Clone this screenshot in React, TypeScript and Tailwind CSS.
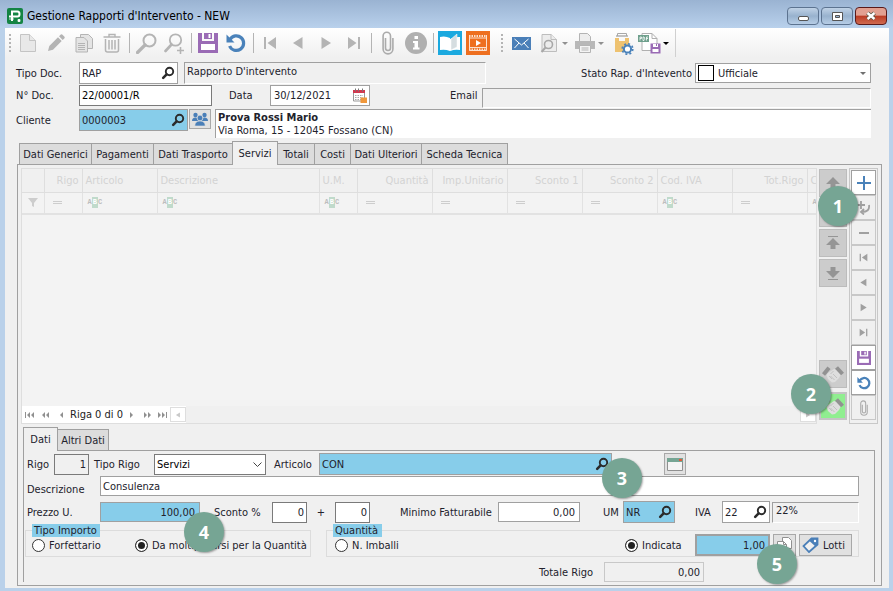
import React, { useState } from "react";
import clsx from "clsx";

const mainTabs = [
  { name: "Dati Generici", width: "w-[73px]" },
  { name: "Pagamenti", width: "w-[63px]" },
  { name: "Dati Trasporto", width: "w-[80px]" },
  { name: "Servizi", width: "w-[46px]" },
  { name: "Totali", width: "w-[38px]" },
  { name: "Costi", width: "w-[37px]" },
  { name: "Dati Ulteriori", width: "w-[72px]" },
  { name: "Scheda Tecnica", width: "w-[87px]" },
];

const columns = [
  { title: "", filter: "funnel", width: "w-[22px]", right: false },
  { title: "Rigo", filter: "eq", width: "w-[38px]", right: true },
  { title: "Articolo", filter: "abc", width: "w-[75px]", right: false },
  { title: "Descrizione", filter: "abc", width: "w-[162px]", right: false },
  { title: "U.M.", filter: "abc", width: "w-[38px]", right: false },
  { title: "Quantità", filter: "eq", width: "w-[75px]", right: true },
  { title: "Imp.Unitario", filter: "eq", width: "w-[75px]", right: true },
  { title: "Sconto 1", filter: "eq", width: "w-[75px]", right: true },
  { title: "Sconto 2", filter: "eq", width: "w-[75px]", right: true },
  { title: "Cod. IVA", filter: "abc", width: "w-[75px]", right: false },
  { title: "Tot.Rigo", filter: "eq", width: "w-[75px]", right: true },
  { title: "C", filter: "abc", width: "", right: false },
];

type IconProps = { className?: string };

const SearchIcon = ({ className }: IconProps) => (
  <svg viewBox="0 0 14 14" className={clsx("h-3.5 w-3.5", className)} fill="none" stroke="currentColor">
    <circle cx="8.5" cy="5.5" r="3.7" strokeWidth="1.9" />
    <path d="M5.6 8.4 2.2 11.800" strokeWidth="2.6" strokeLinecap="round" />
  </svg>
);

const SaveIcon = ({ className }: IconProps) => (
  <svg viewBox="0 0 20 20" className={className}>
    <path d="M0 0h4v8h12V0h4v20H0z" fill="#9a6bb5" />
    <path d="M6 0h8v6H6z" fill="#9a6bb5" />
    <path d="M10.500 1h2v4h-2z" fill="#fff" />
    <path d="M3 11h14v6H3z" fill="#fff" />
  </svg>
);

const UndoIcon = ({ className }: IconProps) => (
  <svg viewBox="0 0 20 20" className={className} fill="none">
    <path d="M4 6.500A7.300 7.300 0 1 1 3.600 13" stroke="#4a82ba" strokeWidth="3.200" />
    <path d="M.5 1.500V9.500H8.500z" fill="#4a82ba" />
  </svg>
);

const ClipIcon = ({ className }: IconProps) => (
  <svg viewBox="0 0 12 24" className={className} fill="none" stroke="#ababab" strokeWidth="1.600">
    <path d="M3.500 7v10a2.500 2.500 0 0 0 5 0V5a3.700 3.700 0 0 0-7.400 0v13a4.900 4.900 0 0 0 9.800 0V7" />
  </svg>
);

const StepIcon = ({ kind, className }: { kind: string; className?: string }) => (
  <svg viewBox="0 0 14 14" className={className} fill="currentColor">
    {kind === "first" && <path d="M1 1h2v12H1zM13 1v12L4.500 7z" />}
    {kind === "prev" && <path d="M11.500 1v12L2 7z" />}
    {kind === "next" && <path d="M2.500 1v12L12 7z" />}
    {kind === "last" && <path d="M11 1h2v12h-2zM1 1v12l8.500-6z" />}
  </svg>
);

const Handshake = () => (
  <svg viewBox="0 0 22 18" className="h-[18px] w-[22px] shrink-0">
    <path d="M6 8l6-4 4 1 3 4-2 4-4 4-3 .5L6 14 4.500 10z" fill="#dedede" />
    <path d="M8.500 9l3-3M10 14l-3-3M12.500 15l-4-4M15 13l-4-4" stroke="#c2c2c2" fill="none" />
    <path d="M1.500 9.500L7 2.800" stroke="#929292" strokeWidth="4" />
    <path d="M14.500 2.500l6 6.500" stroke="#929292" strokeWidth="4" />
  </svg>
);

const Caret = ({ className }: IconProps) => (
  <svg viewBox="0 0 6 3" className={clsx("h-[3px] w-1.5 shrink-0", className)}>
    <path d="M0 0h6L3 3z" fill="currentColor" />
  </svg>
);

const Separator = () => (
  <span className="flex w-1.5 shrink-0 justify-center">
    <span className="h-5 w-px bg-[#b4b4b4]" />
  </span>
);

const Grip = ({ className }: IconProps) => (
  <span className={clsx("flex shrink-0 flex-col items-center gap-0.5", className)}>
    {[0, 1, 2, 3, 4].map((i) => (
      <span key={i} className="h-0.5 w-0.5 bg-[#b4b4b4]" />
    ))}
  </span>
);

const ToolButton = ({ label, children }: { label: string; children: React.ReactNode }) => (
  <button aria-label={label} className="flex h-7 w-7 shrink-0 items-center justify-center text-[#b4b4b4]">
    {children}
  </button>
);

const Badge = ({ n, className }: { n: number; className: string }) => (
  <span
    className={clsx(
      "absolute z-10 flex h-10 w-10 items-center justify-center rounded-full bg-[#76a594] font-['Open_Sans',sans-serif] text-lg font-bold text-white shadow-[1px_1px_2px_rgba(0,0,0,0.35)] [font-stretch:normal]",
      className
    )}
  >
    {n}
  </span>
);

const Lookup = ({
  id,
  value,
  className,
  label,
}: {
  id: string;
  value: string;
  className: string;
  label: string;
}) => (
  <div className={clsx("flex h-[22px] items-center border border-[#a0a0a0] px-0.5", className)}>
    <input id={id} defaultValue={value} className="w-full min-w-0 bg-transparent outline-none" />
    <button aria-label={label} className="shrink-0 text-[#2b2b2b]">
      <SearchIcon />
    </button>
  </div>
);

const Toolbar = () => (
  <div className="flex h-[30px] items-center bg-linear-to-b from-white to-[#f0f0f0]">
    <Grip className="w-[9px]" />
    <ToolButton label="Nuovo">
      <svg viewBox="0 0 18 20" className="h-5 w-[18px]" fill="#e8e8e8" stroke="#c4c4c4">
        <path d="M1.500 1.500h9l6 6v11h-15z" />
        <path d="M10.500 1.500v6h6" />
      </svg>
    </ToolButton>
    <ToolButton label="Modifica">
      <svg viewBox="0 0 18 18" className="h-[18px] w-[18px]" fill="currentColor">
        <path d="M1 17l1.300-5L11 3.300 14.700 7 6 15.700zM12 2.300l1.800-1.800q.7-.5 1.400 0l2.300 2.300q.5.700 0 1.400L15.700 6z" />
      </svg>
    </ToolButton>
    <ToolButton label="Duplica">
      <svg viewBox="0 0 18 20" className="h-5 w-[18px]" fill="#e4e4e4" stroke="#b4b4b4">
        <path d="M5.500 1.500h8l4 4v10h-12z" />
        <path d="M1 4.500h8l3.500 3.500v11H1z" />
        <path d="M3 10.500h7M3 12.500h7M3 14.500h7M3 16.500h7" />
      </svg>
    </ToolButton>
    <ToolButton label="Elimina">
      <svg viewBox="0 0 18 20" className="h-5 w-[18px]" fill="none" stroke="currentColor">
        <path d="M.5 4h17M6 3.500V1.500h6v2" strokeWidth="1.400" />
        <path d="M2.500 6v11q0 2 2 2h9q2 0 2-2V6M6 7v9.500M9 7v9.500M12 7v9.500" strokeWidth="1.500" />
      </svg>
    </ToolButton>
    <Separator />
    <ToolButton label="Cerca">
      <svg viewBox="0 0 21 21" className="h-[21px] w-[21px]" fill="none" stroke="currentColor">
        <circle cx="13.500" cy="7.500" r="6" strokeWidth="2" />
        <path d="M9 12l-7.500 7.500" strokeWidth="3.200" strokeLinecap="round" />
      </svg>
    </ToolButton>
    <ToolButton label="Ricerca avanzata">
      <svg viewBox="0 0 21 21" className="h-[21px] w-[21px]" fill="none" stroke="currentColor">
        <circle cx="11.500" cy="7" r="5.700" strokeWidth="1.800" />
        <path d="M7.500 11.500L1.500 18" strokeWidth="2.600" strokeLinecap="round" />
        <path d="M13 17.500h7M16.500 14v7" strokeWidth="1.600" />
      </svg>
    </ToolButton>
    <Separator />
    <ToolButton label="Salva">
      <SaveIcon className="h-5 w-5" />
    </ToolButton>
    <ToolButton label="Annulla">
      <UndoIcon className="h-5 w-5" />
    </ToolButton>
    <Separator />
    {["first", "prev", "next", "last"].map((kind) => (
      <ToolButton key={kind} label={kind}>
        <StepIcon kind={kind} className="h-3.5 w-3.5" />
      </ToolButton>
    ))}
    <Separator />
    <ToolButton label="Allegati">
      <ClipIcon className="h-6 w-3" />
    </ToolButton>
    <ToolButton label="Informazioni">
      <svg viewBox="0 0 22 22" className="h-[22px] w-[22px]">
        <circle cx="11" cy="11" r="11" fill="#b0b0b0" />
        <path d="M9.500 4h3.500v3H9.500zM8 9h5v6.500h1.500V17.500H8v-2h1.500V11H8z" fill="#fff" />
      </svg>
    </ToolButton>
    <Separator />
    <ToolButton label="Manuale">
      <svg viewBox="0 0 24 24" className="h-6 w-6">
        <path d="M0 0h24v24H0z" fill="#1ba9df" />
        <path d="M2 6q5-1.500 10 1v13q-5-2-10-1z" fill="#fff" />
        <path d="M12 8q5-2.500 10-2v13q-5-1-10 1z" fill="#fff" />
        <path d="M13 8l6-5v13l-6 3z" fill="#d5dde0" stroke="#fff" strokeWidth=".5" />
      </svg>
    </ToolButton>
    <ToolButton label="Video">
      <svg viewBox="0 0 24 24" className="h-6 w-6">
        <path d="M0 0h24v24H0z" fill="#ee6f1f" />
        <path d="M3 5h18M3 18.500h18" stroke="#fbe0cd" strokeWidth="2" strokeDasharray="1.500 1" />
        <path d="M3.500 4v15.500h17V4M3.500 7h17M3.500 16.500h17" stroke="#fbe0cd" fill="none" strokeWidth="1" />
        <path d="M10 9l5 3-5 3z" fill="#fff" />
      </svg>
    </ToolButton>
    <Grip className="w-5" />
    <button aria-label="Invia email" className="flex w-[18px] shrink-0 justify-center">
      <svg viewBox="0 0 19 13" className="h-[13px] w-[19px] shrink-0">
        <path d="M0 0h19v13H0z" fill="#4a7fb8" />
        <path d="M2.500 2l7 6 7-6M2.500 11l4.500-5M16.500 11L12 6" stroke="#fff" fill="none" />
      </svg>
    </button>
    <button aria-label="Anteprima" className="ml-2.5 flex shrink-0 items-center gap-1 text-[#909090]">
      <svg viewBox="0 0 18 20" className="h-5 w-[18px]" fill="#ececec" stroke="#bdbdbd">
        <path d="M2 1.500h9l5.500 5v12H2z" />
        <path d="M11 1.500v5h5.500" />
        <circle cx="8.500" cy="11.500" r="4" strokeWidth="1.600" stroke="#a8a8a8" />
        <path d="M5.500 14.500L1.500 19" strokeWidth="2" stroke="#a8a8a8" />
      </svg>
      <Caret />
    </button>
    <button aria-label="Stampa" className="ml-1.5 flex shrink-0 items-center gap-0.5 text-[#909090]">
      <svg viewBox="0 0 22 20" className="h-5 w-[22px]">
        <path d="M5.500.5h8l3 3v5h-11z" fill="#eee" stroke="#b4b4b4" />
        <path d="M1 8h20v8H1z" fill="#b8b8b8" />
        <path d="M5.500 12.500h11v7h-11z" fill="#f4f4f4" stroke="#b4b4b4" />
        <path d="M7.500 15h7M7.500 17h7" stroke="#b4b4b4" />
      </svg>
      <Caret />
    </button>
    <button aria-label="Archivio" className="ml-2.5 flex shrink-0">
      <svg viewBox="0 0 20 23" className="h-[23px] w-5">
        <path d="M3.500 4V1.500h9V4" fill="none" stroke="#a8a8a8" />
        <path d="M2 4h12" stroke="#a8a8a8" strokeWidth="1.400" />
        <path d="M1 6h4v3h6V6h4v14H1z" fill="#eec270" />
        <circle cx="13.500" cy="17" r="3.600" fill="#fff" stroke="#4a82ba" strokeWidth="2" />
        <circle cx="13.500" cy="17" r="5.300" fill="none" stroke="#4a82ba" strokeWidth="1.600" strokeDasharray="2 2.160" />
      </svg>
    </button>
    <button aria-label="Esporta PDF" className="ml-1 flex shrink-0 items-center gap-0.5 text-black">
      <svg viewBox="0 0 23 22" className="h-[22px] w-[23px]">
        <path d="M4 1.500h10l5 5v12H4z" fill="#fff" stroke="#b0b0b0" />
        <path d="M14 1.500v5h5" fill="none" stroke="#b0b0b0" />
        <path d="M0 3h11v7H0z" fill="#6fa08d" />
        <path d="M2 8.500V5h1.500v1.500H2M5 5h1l.7 1v1.500L6 8.500H5zM10 5H8.500v3.500M8.500 6.500H10" stroke="#fff" strokeWidth=".8" fill="none" />
        <path d="M12.500 11.500h10v10h-10z" fill="#9a6bb5" />
        <path d="M15 12h5v3h-5zM14.500 17h6v3h-6z" fill="#fff" />
        <path d="M18 12h1v2h-1z" fill="#9a6bb5" />
      </svg>
      <Caret />
    </button>
    <span className="ml-1.5 h-7 w-px bg-[#d0d0d0]" />
  </div>
);

const FilterCell = ({ kind }: { kind: string }) => {
  if (kind === "funnel")
    return (
      <svg viewBox="0 0 10 9" className="mx-auto h-[9px] w-2.5">
        <path d="M0 0h10L6 5v4L4 8V5z" fill="#cdcdcd" />
      </svg>
    );
  if (kind === "eq")
    return (
      <svg viewBox="0 0 9 3" className="ml-2 h-[3px] w-[9px]">
        <path d="M0 .5h9M0 2.500h9" stroke="#cdcdcd" />
      </svg>
    );
  return (
    <span className="ml-[5px] flex items-center font-['Liberation_Mono',monospace] text-[7px] leading-[11px] font-bold text-[#bdbdbd]">
      A<span className="bg-[#c0dacb] px-px text-white">B</span>C
    </span>
  );
};

const Grid = () => (
  <div className="flex min-w-0 flex-1 flex-col overflow-hidden border border-[#dedede] bg-[#f3f3f3]">
    <table className="w-full table-fixed border-collapse text-[#d3d3d3]">
      <thead>
        <tr className="h-[23px] bg-[#f0f0f0]">
          {columns.map((col, i) => (
            <th
              key={i}
              className={clsx(
                "overflow-hidden border-r border-b border-[#dedede] px-[3px] font-normal whitespace-nowrap last:border-r-0",
                col.width,
                col.right ? "text-right" : "text-left"
              )}
            >
              {col.title}
            </th>
          ))}
        </tr>
      </thead>
      <tbody>
        <tr className="h-[22px] border-b-2 border-[#e2e2e2]">
          {columns.map((col, i) => (
            <td key={i} className="overflow-hidden border-r border-[#e2e2e2] last:border-r-0">
              <FilterCell kind={col.filter} />
            </td>
          ))}
        </tr>
      </tbody>
    </table>
    <div className="flex-1" />
    <div className="flex h-[17px] items-center justify-between bg-[#f0f0f0]">
      <div className="flex h-full items-center bg-white text-[#909090]">
        <button aria-label="Prima riga" className="w-4 pl-[3px]">
          <svg viewBox="0 0 10 6" className="h-1.5 w-2.5" fill="currentColor">
            <path d="M0 0h1v6H0zM5 0v6L2 3zM9 0v6L6 3z" />
          </svg>
        </button>
        <button aria-label="Pagina precedente" className="w-4 pl-1">
          <svg viewBox="0 0 8 6" className="h-1.5 w-2" fill="currentColor">
            <path d="M3 0v6L0 3zM7 0v6L4 3z" />
          </svg>
        </button>
        <button aria-label="Riga precedente" className="w-4 pl-1.5">
          <svg viewBox="0 0 4 6" className="h-1.5 w-1" fill="currentColor">
            <path d="M3 0v6L0 3z" />
          </svg>
        </button>
        <span className="w-[52px] text-center whitespace-nowrap text-[#222]">Riga 0 di 0</span>
        <button aria-label="Riga successiva" className="w-4 pl-2">
          <svg viewBox="0 0 4 6" className="h-1.5 w-1" fill="currentColor">
            <path d="M0 0v6l3-3z" />
          </svg>
        </button>
        <button aria-label="Pagina successiva" className="w-4 pl-1.5">
          <svg viewBox="0 0 8 6" className="h-1.5 w-2" fill="currentColor">
            <path d="M0 0v6l3-3zM4 0v6l3-3z" />
          </svg>
        </button>
        <button aria-label="Ultima riga" className="w-4 pl-1">
          <svg viewBox="0 0 10 6" className="h-1.5 w-2.5" fill="currentColor">
            <path d="M0 0v6l3-3zM4 0v6l3-3zM8 0h1v6H8z" />
          </svg>
        </button>
        <button
          aria-label="Scorri a sinistra"
          className="flex h-[15px] w-4 items-center justify-center border border-[#dedede] text-[#c8c8c8]"
        >
          <StepIcon kind="prev" className="h-1.5 w-1.5" />
        </button>
      </div>
      <button
        aria-label="Scorri a destra"
        className="flex h-[15px] w-4 items-center justify-center border border-[#dedede] bg-white text-[#c8c8c8]"
      >
        <StepIcon kind="next" className="h-1.5 w-1.5" />
      </button>
    </div>
  </div>
);

const moveArrows = [
  { label: "Su", path: "M7 1l7 7H9.500v5h-5V8H0z" },
  { label: "Giù", path: "M7 14L0 7h4.500V2h5v5H14z" },
  { label: "In cima", path: "M2 0h10v1H2zM7 2l7 7H9.500v4h-5V9H0z" },
  { label: "In fondo", path: "M2 13h10v1H2zM7 12L0 5h4.500V1h5v4H14z" },
];

const SideButton = ({ label, children }: { label: string; children: React.ReactNode }) => (
  <button
    aria-label={label}
    className="flex h-7 w-7 items-center justify-center border border-[#bcbcbc] bg-[#cccccc] text-[#959595]"
  >
    {children}
  </button>
);

const RowButton = ({
  label,
  active,
  children,
}: {
  label: string;
  active?: boolean;
  children: React.ReactNode;
}) => (
  <button
    aria-label={label}
    className={clsx(
      "flex h-[25px] w-[25px] items-center justify-center border",
      active ? "border-[#a0a0a0] bg-white" : "border-[#c8c8c8] text-[#a0a0a0]"
    )}
  >
    {children}
  </button>
);

const RigoForm = () => (
  <div className="flex flex-col border border-b-0 border-[#a0a0a0] pt-0.5 pr-[15px] pl-[3px]">
    <div className="flex h-[22px] items-center">
      <label htmlFor="rigo" className="w-[27px]">
        Rigo
      </label>
      <input
        id="rigo"
        defaultValue="1"
        className="h-[21px] w-[35px] border border-[#7a7a7a] bg-[#f0f0f0] px-0.5 text-right outline-none"
      />
      <label htmlFor="tipo-rigo" className="ml-[5px] w-[60px]">
        Tipo Rigo
      </label>
      <div className="relative">
        <select
          id="tipo-rigo"
          className="h-[21px] w-28 appearance-none border border-[#7a7a7a] bg-white px-0.5 text-black outline-none"
        >
          <option>Servizi</option>
        </select>
        <svg viewBox="0 0 9 5" className="pointer-events-none absolute top-2 right-1 h-[5px] w-[9px]">
          <path d="M.5.5l4 4 4-4" fill="none" stroke="#444" />
        </svg>
      </div>
      <label htmlFor="articolo" className="ml-2 w-[45px]">
        Articolo
      </label>
      <div className="relative flex-1">
        <Lookup id="articolo" value="CON" label="Cerca articolo" className="bg-[#87cdea]" />
        <Badge n={3} className="top-[5px] -right-[30px]" />
      </div>
      <button
        aria-label="Apri scheda"
        className="mr-[173px] ml-[52px] flex h-[22px] w-[22px] items-center justify-center border border-[#a8a8a8] bg-[#e1e1e1]"
      >
        <svg viewBox="0 0 16 13" className="h-[13px] w-4 shrink-0">
          <path d="M.5.5h15v12H.5z" fill="#f4f4f4" stroke="#909090" />
          <path d="M0 0h16v4H0z" fill="#76a594" />
          <path d="M12 1h3v2h-3z" fill="#e2593b" />
        </svg>
      </button>
    </div>
    <div className="mt-px flex h-5 items-center">
      <label htmlFor="descrizione" className="w-[73px] pt-1.5">
        Descrizione
      </label>
      <input
        id="descrizione"
        defaultValue="Consulenza"
        className="h-5 min-w-0 flex-1 border border-[#a0a0a0] bg-white px-0.5 outline-none"
      />
    </div>
    <div className="mt-[5px] flex h-[22px] items-center whitespace-nowrap">
      <label htmlFor="prezzo" className="w-[73px]">
        Prezzo U.
      </label>
      <div className="relative w-[100px]">
        <input
          id="prezzo"
          defaultValue="100,00"
          className="h-5 w-full border border-[#a0a0a0] bg-[#87cdea] px-1 text-right outline-none"
        />
        <Badge n={4} className="top-2.5 -right-6" />
      </div>
      <label htmlFor="sconto1" className="ml-3.5 w-[58px]">
        Sconto %
      </label>
      <input
        id="sconto1"
        defaultValue="0"
        className="h-[21px] w-[35px] border border-[#7a7a7a] bg-white px-0.5 text-right outline-none"
      />
      <label htmlFor="sconto2" className="w-7 text-center">
        +
      </label>
      <input
        id="sconto2"
        defaultValue="0"
        className="h-[21px] w-[35px] border border-[#7a7a7a] bg-white px-0.5 text-right outline-none"
      />
      <label htmlFor="minimo" className="ml-[30px] w-[98px]">
        Minimo Fatturabile
      </label>
      <input
        id="minimo"
        defaultValue="0,00"
        className="h-5 w-[82px] border border-[#a0a0a0] bg-white px-1 text-right outline-none"
      />
      <label htmlFor="um" className="ml-[23px] w-5">
        UM
      </label>
      <Lookup id="um" value="NR" label="Cerca UM" className="w-[52px] bg-[#87cdea]" />
      <label htmlFor="iva" className="ml-5 w-[27px]">
        IVA
      </label>
      <Lookup id="iva" value="22" label="Cerca IVA" className="w-12 bg-white" />
      <input
        aria-label="Descrizione IVA"
        readOnly
        defaultValue="22%"
        className="ml-0.5 h-[21px] min-w-0 flex-1 border border-t-[#a0a0a0] border-r-white border-b-white border-l-[#a0a0a0] px-[3px] pb-1 outline-none"
      />
    </div>
    <div className="mt-px flex gap-[15px]">
      <fieldset className="-ml-0.5 h-[33px] w-[286px] border border-[#dcdcdc] pl-1.5">
        <legend className="h-[13px] w-[68px] bg-[#87cdea] pl-0.5 leading-[13px]">Tipo Importo</legend>
        <div className="-mt-[3px] flex h-[22px] items-center">
          <label className="flex w-[103px] items-center gap-1">
            <input
              type="radio"
              name="importo"
              className="h-[13px] w-[13px] appearance-none rounded-full border border-[#333] bg-white checked:bg-[#222] checked:shadow-[inset_0_0_0_2px_white]"
            />
            Forfettario
          </label>
          <label className="flex items-center gap-1 whitespace-nowrap">
            <input
              type="radio"
              name="importo"
              defaultChecked
              className="h-[13px] w-[13px] shrink-0 appearance-none rounded-full border border-[#333] bg-white checked:bg-[#222] checked:shadow-[inset_0_0_0_2px_white]"
            />
            Da moltiplicarsi per la Quantità
          </label>
        </div>
      </fieldset>
      <fieldset className="h-[33px] min-w-0 flex-1 border border-[#dcdcdc] pr-1.5 pl-1.5">
        <legend className="h-[13px] w-[49px] bg-[#87cdea] pl-0.5 leading-[13px]">Quantità</legend>
        <div className="-mt-[3px] flex h-[22px] items-center">
          <label className="ml-0.5 flex items-center gap-1">
            <input
              type="radio"
              name="quantita"
              className="h-[13px] w-[13px] appearance-none rounded-full border border-[#333] bg-white checked:bg-[#222] checked:shadow-[inset_0_0_0_2px_white]"
            />
            N. Imballi
          </label>
          <label className="ml-auto flex w-[70px] items-center gap-1">
            <input
              type="radio"
              name="quantita"
              defaultChecked
              className="h-[13px] w-[13px] appearance-none rounded-full border border-[#333] bg-white checked:bg-[#222] checked:shadow-[inset_0_0_0_2px_white]"
            />
            Indicata
          </label>
          <input
            aria-label="Quantità indicata"
            defaultValue="1,00"
            className="h-[22px] w-[75px] border-2 border-[#a0a0a0] bg-[#87cdea] px-[3px] text-right outline-none"
          />
          <div className="relative ml-[3px]">
            <button
              aria-label="Copia quantità"
              className="flex h-[22px] w-[23px] items-center justify-center border border-[#a8a8a8] bg-[#e1e1e1]"
            >
              <svg viewBox="0 0 15 17" className="h-[17px] w-[15px]" fill="#fff" stroke="#909090">
                <path d="M5.500.5h6l3 3v8h-9z" />
                <path d="M.5 4.500h6l3 3v9h-9z" />
                <path d="M6.500 4.500v3h3" fill="none" />
              </svg>
            </button>
            <Badge n={5} className="top-2.5 -left-4" />
          </div>
          <button className="ml-[3px] flex h-[22px] w-[53px] items-center gap-1 border border-[#a8a8a8] bg-[#e1e1e1] pl-0.5">
            <svg viewBox="0 0 17 16" className="h-4 w-[17px] shrink-0">
              <path d="M9.500 1.500h6v6L7 15 1.500 9z" fill="#f0f0f0" stroke="#4a7fb8" strokeWidth="1.800" />
              <path d="M9.500 1h6.500v6.500l-2.500 2-6-5.500z" fill="#4a7fb8" />
              <circle cx="13" cy="4" r="1.200" fill="#fff" />
            </svg>
            Lotti
          </button>
        </div>
      </fieldset>
    </div>
    <div className="mt-[5px] flex h-5 items-center justify-end pr-[155px]">
      <label htmlFor="totale" className="w-[65px]">
        Totale Rigo
      </label>
      <input
        id="totale"
        readOnly
        defaultValue="0,00"
        className="h-5 w-[100px] border border-[#c8c8c8] px-[3px] text-right outline-none"
      />
    </div>
  </div>
);

const App = () => {
  const [tab, setTab] = useState("Servizi");

  return (
    <div className="flex min-h-screen flex-col bg-[#bad1ea] pr-1 pb-1 pl-[5px] font-['DejaVu_Sans_Condensed','DejaVu_Sans',sans-serif] text-[11px] leading-[13px] font-normal text-[#22222c] [font-stretch:condensed]">
      <header className="-mr-1 -ml-[5px] flex h-7 items-start bg-linear-to-b from-[#9ab3d2] to-[#b9d1ec] pt-[7px] pr-1.5 pl-[7px]">
        <svg viewBox="0 0 16 16" className="mt-px h-4 w-4">
          <rect width="16" height="16" rx="2" fill="#148444" />
          <path d="M5 13V3.500h5.500q2 0 2 2.500t-2 2.500H2" fill="none" stroke="#fff" strokeWidth="2" />
          <path d="M2 11h5M11 11.500h2v2h-2z" stroke="#fff" fill="#fff" strokeWidth=".8" />
        </svg>
        <h1 className="ml-1 text-xs leading-[18px] text-black">Gestione Rapporti d'Intervento - NEW</h1>
        <div className="ml-auto flex gap-0.5">
          <button
            aria-label="Riduci a icona"
            className="flex h-[18px] w-8 items-center justify-center rounded-sm border border-[#5c7390] bg-linear-to-b from-[#c0d2e6] via-[#98b2ce] to-[#b6cde6]"
          >
            <span className="mt-1 h-[5px] w-[11px] rounded-xs border border-[#555] bg-white" />
          </button>
          <button
            aria-label="Ingrandisci"
            className="flex h-[18px] w-8 items-center justify-center rounded-sm border border-[#5c7390] bg-linear-to-b from-[#c0d2e6] via-[#98b2ce] to-[#b6cde6]"
          >
            <svg viewBox="0 0 11 9" className="h-[9px] w-[11px]">
              <path d="M.5.5h10v8H.5z" fill="#fff" stroke="#555" />
              <path d="M3.500 3.500h4v2h-4z" fill="#9ab3d2" stroke="#555" />
            </svg>
          </button>
          <button
            aria-label="Chiudi"
            className="flex h-[18px] w-8 items-center justify-center rounded-sm border border-[#5a1a1a] bg-linear-to-b from-[#e2a091] from-45% via-[#bb3a22] via-50% to-[#cf6a50]"
          >
            <svg viewBox="0 0 12 10" className="h-2.5 w-3">
              <path d="M2.500 2l7 6M9.500 2l-7 6" stroke="#554" strokeWidth="4" />
              <path d="M2.500 2l7 6M9.500 2l-7 6" stroke="#fff" strokeWidth="2.400" />
            </svg>
          </button>
        </div>
      </header>

      <main className="flex flex-1 flex-col bg-[#f0f0f0]">
        <Toolbar />

        <section className="mt-1 flex flex-col gap-px pr-[18px] pl-[11px]">
          <div className="flex h-[22px] items-center">
            <label htmlFor="tipo-doc" className="w-[63px]">
              Tipo Doc.
            </label>
            <Lookup id="tipo-doc" value="RAP" label="Cerca tipo documento" className="w-[99px] bg-white" />
            <input
              aria-label="Descrizione tipo documento"
              readOnly
              defaultValue="Rapporto D'intervento"
              className="ml-1.5 h-[22px] w-[302px] border border-t-[#a0a0a0] border-r-white border-b-white border-l-[#a0a0a0] px-0.5 pb-1 outline-none"
            />
            <label htmlFor="stato" className="mr-[3px] ml-auto whitespace-nowrap">
              Stato Rap. d'Intevento
            </label>
            <div className="flex h-5 w-44 items-center border border-[#a0a0a0] bg-white pr-1 pl-0.5">
              <span className="h-4 w-4 shrink-0 border border-black bg-white" />
              <select id="stato" className="ml-1 flex-1 appearance-none bg-white outline-none">
                <option>Ufficiale</option>
              </select>
              <Caret className="text-[#707070]" />
            </div>
          </div>
          <div className="flex h-[21px] items-center">
            <label htmlFor="n-doc" className="w-[63px]">
              N° Doc.
            </label>
            <input
              id="n-doc"
              defaultValue="22/00001/R"
              className="h-[21px] w-[133px] border border-[#7a7a7a] bg-white px-0.5 text-black outline-none"
            />
            <label htmlFor="data" className="ml-[17px] w-[41px]">
              Data
            </label>
            <div className="flex h-[21px] w-[100px] items-center border border-[#a0a0a0] bg-white pr-0.5 pl-[3px]">
              <input id="data" defaultValue="30/12/2021" className="w-full min-w-0 outline-none" />
              <button aria-label="Apri calendario" className="shrink-0">
                <svg viewBox="0 0 15 15" className="h-[15px] w-[15px]">
                  <path d="M1.500 3.500h11v9.500h-11z" fill="#fff" stroke="#999" />
                  <path d="M1 2h12v3H1z" fill="#d2384f" />
                  <path d="M3.500.500v3M6.500.500v3M10.500.500v3" stroke="#777" />
                  <path d="M3 7.500h8M3 9.500h8M3 11.500h8" stroke="#aaa" strokeDasharray="1.500 1" />
                  <path d="M8.500 9.500H15V15H8.500z" fill="#f0983c" />
                </svg>
              </button>
            </div>
            <label htmlFor="email" className="ml-20 w-8">
              Email
            </label>
            <input
              id="email"
              readOnly
              className="mt-1 h-5 min-w-0 flex-1 border border-t-[#a0a0a0] border-r-white border-b-white border-l-[#a0a0a0] px-0.5 outline-none"
            />
          </div>
          <div className="mt-0.5 flex h-[29px] items-start">
            <label htmlFor="cliente" className="w-[63px] leading-6">
              Cliente
            </label>
            <Lookup id="cliente" value="0000003" label="Cerca cliente" className="w-[109px] bg-[#87cdea]" />
            <button
              aria-label="Anagrafica cliente"
              className="ml-px flex h-5 w-[22px] items-center justify-center border border-[#a8a8a8] bg-[#e1e1e1]"
            >
              <svg viewBox="0 0 16 14" className="h-3.5 w-4 shrink-0" fill="#4a7fb8">
                <circle cx="3.500" cy="3" r="2.200" />
                <circle cx="12.500" cy="3" r="2.200" />
                <path d="M0 9q0-3.500 3.500-3.500Q7 5.500 7 9zM9 9q0-3.500 3.500-3.500Q16 5.500 16 9z" />
                <circle cx="8" cy="6" r="2.900" stroke="#e1e1e1" strokeWidth=".8" />
                <path d="M2.800 14q0-5 5.200-5t5.200 5z" stroke="#e1e1e1" strokeWidth=".6" />
              </svg>
            </button>
            <div className="ml-1 h-[29px] flex-1 border-t border-l border-[#a0a0a0] bg-white pt-px pl-0.5">
              <p className="font-bold">Prova Rossi Mario</p>
              <p>Via Roma, 15 - 12045 Fossano (CN)</p>
            </div>
          </div>
        </section>

        <section className="mt-[3px] mr-[7px] mb-0.5 ml-3 flex flex-1 flex-col">
          <div role="tablist" className="flex h-[23px] items-end pl-0.5">
            {mainTabs.map(({ name, width }) => (
              <button
                key={name}
                role="tab"
                aria-selected={tab === name}
                onClick={() => setTab(name)}
                className={clsx(
                  "-mr-px shrink-0 border border-b-0 border-[#a0a0a0] whitespace-nowrap",
                  width,
                  tab === name ? "relative z-10 -mb-px h-6 bg-[#f0f0f0]" : "h-[21px] bg-[#dcdcdc]"
                )}
              >
                {name}
              </button>
            ))}
          </div>
          <div className="flex flex-1 flex-col border border-[#a0a0a0] p-[3px]">
            <div className="flex gap-0.5">
              <Grid />
              <div className="relative flex flex-col gap-0.5 pt-px">
                {moveArrows.map(({ label, path }) => (
                  <SideButton key={label} label={label}>
                    <svg viewBox="0 0 14 14" className="h-3.5 w-3.5" fill="currentColor">
                      <path d={path} />
                    </svg>
                  </SideButton>
                ))}
                <div className="flex-1" />
                <SideButton label="Accetta">
                  <Handshake />
                </SideButton>
                <button
                  aria-label="Conferma"
                  className="mt-0.5 mb-1 flex h-7 w-7 items-center justify-center border-2 border-[#c4c4c4] bg-[#90ee90]"
                >
                  <Handshake />
                </button>
                <Badge n={1} className="top-[18px] -left-px" />
                <Badge n={2} className="bottom-2.5 -left-7" />
              </div>
              <div className="border border-[#c8c8c8] px-px pt-px pb-[3px]">
                <RowButton label="Aggiungi riga" active>
                  <svg viewBox="0 0 14 14" className="h-3.5 w-3.5">
                    <path d="M0 7h14M7 0v14" stroke="#4a82ba" strokeWidth="2" />
                  </svg>
                </RowButton>
                <RowButton label="Inserisci riga">
                  <svg viewBox="0 0 14 14" className="h-3.5 w-3.5" fill="none" stroke="currentColor">
                    <path d="M0 4h8M4 0v8M12 4q1 7-7 7M7 8l-3 3 3 2.500" strokeWidth="1.800" />
                  </svg>
                </RowButton>
                <RowButton label="Elimina riga">
                  <span className="h-0.5 w-2.5 bg-[#a0a0a0]" />
                </RowButton>
                {["first", "prev", "next", "last"].map((kind) => (
                  <RowButton key={kind} label={kind}>
                    <StepIcon kind={kind} className="h-[9px] w-[9px]" />
                  </RowButton>
                ))}
                <RowButton label="Salva riga" active>
                  <SaveIcon className="h-3.5 w-3.5" />
                </RowButton>
                <RowButton label="Annulla riga" active>
                  <UndoIcon className="h-3.5 w-3.5" />
                </RowButton>
                <RowButton label="Allegati riga">
                  <ClipIcon className="h-4 w-2" />
                </RowButton>
              </div>
            </div>

            <div className="mt-[3px] mr-[3px] ml-0.5">
              <div role="tablist" className="flex h-[23px] items-end">
                <button
                  role="tab"
                  aria-selected
                  className="relative z-10 -mb-px h-6 w-[35px] border border-b-0 border-[#a0a0a0] bg-[#f0f0f0]"
                >
                  Dati
                </button>
                <button
                  role="tab"
                  aria-selected={false}
                  className="-ml-px h-[21px] w-[52px] border border-b-0 border-[#a0a0a0] bg-[#dcdcdc] whitespace-nowrap"
                >
                  Altri Dati
                </button>
              </div>
              <RigoForm />
            </div>
          </div>
        </section>
      </main>
    </div>
  );
};

export default App;
